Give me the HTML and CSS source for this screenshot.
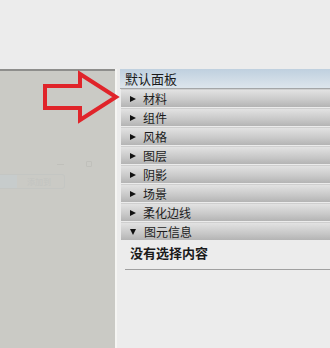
FILE: index.html
```html
<!DOCTYPE html>
<html lang="zh-CN">
<head>
    <meta charset="UTF-8">
    <title>默认面板</title>
    <link rel="stylesheet" href="styles.css">
</head>
<body>
    <div class="top"></div>
    <div class="main">
        <div class="left">
            <div class="ghost-tools">
                <span class="ghost-dash"></span>
                <span class="ghost-box"></span>
            </div>
            <div class="ghost-btn">
                <span class="ghost-icon"></span>
                <span class="ghost-label">添加到</span>
            </div>
            <svg class="arrow" width="130" height="60" viewBox="0 0 130 60">
                <polygon points="45,15 80,15 80,3 116,26 80,49 80,37 45,37"
                         fill="none" stroke="#e0242a" stroke-width="4" stroke-linejoin="miter"/>
            </svg>
        </div>
        <div class="divider"></div>
        <div class="panel">
            <div class="panel-title">默认面板</div>
            <ul class="trays">
                <li class="tray"><span class="tri"></span>材料</li>
                <li class="tray"><span class="tri"></span>组件</li>
                <li class="tray"><span class="tri"></span>风格</li>
                <li class="tray"><span class="tri"></span>图层</li>
                <li class="tray"><span class="tri"></span>阴影</li>
                <li class="tray"><span class="tri"></span>场景</li>
                <li class="tray"><span class="tri"></span>柔化边线</li>
                <li class="tray open"><span class="tri"></span>图元信息</li>
            </ul>
            <div class="entity-info">没有选择内容</div>
        </div>
    </div>
</body>
</html>
```

FILE: styles.css
```css
* {
    margin: 0;
    padding: 0;
    box-sizing: border-box;
}
body {
    width: 330px;
    height: 348px;
    overflow: hidden;
    background: #ececec;
    font-family: "Noto Sans CJK SC", "Liberation Sans", sans-serif;
    color: #1a1a1a;
}
.top {
    height: 69px;
    background: #ececec;
}
.main {
    display: flex;
    height: 279px;
}
.left {
    position: relative;
    width: 115px;
    background: #cacac5;
    border-top: 2px solid #8e8e8c;
    padding-top: 89px;
}
.ghost-tools {
    display: flex;
    align-items: center;
    justify-content: flex-end;
    gap: 22px;
    padding-right: 23px;
    height: 8px;
}
.ghost-dash {
    width: 7px;
    height: 1px;
    background: #c0c0bb;
}
.ghost-box {
    width: 6px;
    height: 6px;
    border: 1px solid #c0c0bb;
    border-radius: 1px;
}
.ghost-btn {
    display: flex;
    align-items: center;
    width: 65px;
    height: 15px;
    margin-top: 6px;
    border: 1px solid #c4c6c3;
    border-left: none;
    border-radius: 0 3px 3px 0;
}
.ghost-icon {
    width: 17px;
    height: 100%;
    background: #c7cccc;
}
.ghost-label {
    font-size: 8px;
    color: #c2c4c1;
    padding-left: 10px;
}
.arrow {
    position: absolute;
    left: 0;
    top: 0;
    overflow: visible;
}
.divider {
    width: 2px;
    background: #f5f5f3;
}
.panel {
    flex: 1;
    padding-left: 3px;
}
.panel-title {
    height: 20px;
    padding-left: 5px;
    font-size: 13px;
    line-height: 19px;
    background: linear-gradient(#bfd0df, #dde5ec);
    border-bottom: 1px solid #a4a6a8;
}
.trays {
    list-style: none;
    padding-left: 1px;
}
.tray {
    display: flex;
    align-items: center;
    height: 18px;
    margin-bottom: 1px;
    padding-left: 9px;
    font-size: 12px;
    color: #1c1c1c;
    background: linear-gradient(#e2e2e2, #c8c8c8 60%, #b4b4b4);
    border-top: 1px solid #cfcfcf;
}
.tri {
    width: 0;
    height: 0;
    margin-right: 7px;
    border-top: 3.5px solid transparent;
    border-bottom: 3.5px solid transparent;
    border-left: 6px solid #111;
}
.tray.open .tri {
    border-left: 3.5px solid transparent;
    border-right: 3.5px solid transparent;
    border-top: 6px solid #111;
    border-bottom: none;
    margin-right: 8px;
}
.entity-info {
    margin-left: 5px;
    margin-top: 3px;
    padding: 0 0 6px 5px;
    font-size: 13px;
    font-weight: bold;
    line-height: 20px;
    border-bottom: 1px solid #a0a0a0;
}
```
